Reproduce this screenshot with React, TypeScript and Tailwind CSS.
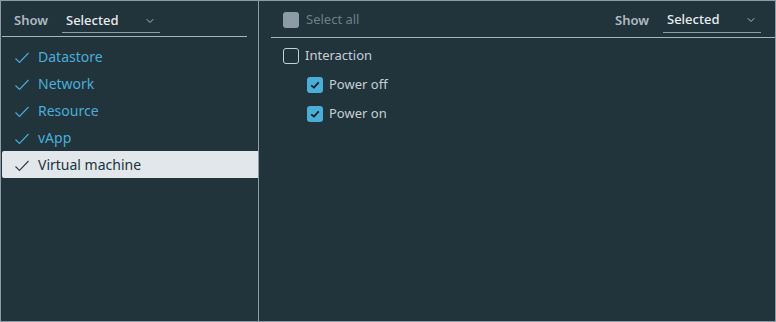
import { ChevronDown } from "lucide-react";

const types = ["Datastore", "Network", "Resource", "vApp", "Virtual machine"];

function Check({ className }: { className: string }) {
  return (
    <svg viewBox="0 0 16 16" className={className} fill="none" stroke="currentColor" strokeWidth="1.1">
      <path d="M1.5 9.5 L5.5 13.5 L14.5 4" />
    </svg>
  );
}

function ShowSelect() {
  return (
    <div className="flex items-center gap-[14px]">
      <span className="text-[13px] font-semibold text-[#adbbc4]">Show</span>
      <div className="flex items-center justify-between w-[98px] h-[24px] border-b border-[#8c9ba5] pl-[4px] pr-[4px]">
        <span className="text-[13px] font-medium text-[#e9ecef]">Selected</span>
        <ChevronDown className="w-[12px] h-[12px] text-[#adbbc4]" strokeWidth={2} />
      </div>
    </div>
  );
}

function Box({ checked }: { checked: boolean }) {
  if (checked) {
    return (
      <span className="flex items-center justify-center w-[16px] h-[16px] rounded-[3px] bg-[#49afd9]">
        <svg viewBox="0 0 16 16" className="w-[12px] h-[12px]" fill="none" stroke="#0e1d25" strokeWidth="2.4">
          <path d="M3 8.5 L6.5 11.5 L13 4.5" />
        </svg>
      </span>
    );
  }
  return <span className="w-[16px] h-[16px] rounded-[3px] border border-[#c5d0d6]" />;
}

export default function App() {
  return (
    <div
      className="w-[776px] h-[322px] bg-[#21333b] border border-[#8c9ba5] flex"
      style={{ fontFamily: '"Noto Sans", sans-serif' }}
    >
      <div className="w-[258px] border-r border-[#8c9ba5] flex flex-col">
        <div className="h-[36px] ml-[1px] mr-[11px] border-b border-[#a9b3b9] flex items-center pl-[12px] pt-[5px]">
          <ShowSelect />
        </div>
        <ul className="pt-[6px] pl-[1px]">
          {types.map((t) => {
            const active = t === "Virtual machine";
            return (
              <li
                key={t}
                className={`h-[27px] flex items-center gap-[8px] pl-[12px] ${
                  active ? "bg-[#e1e7ea] text-[#21333b] rounded-l-[2px]" : "text-[#49afd9]"
                }`}
              >
                <Check className={`w-[16px] h-[16px] ${active ? "text-[#313d43]" : "text-[#49afd9]"}`} />
                <span className="text-[14px]">{t}</span>
              </li>
            );
          })}
        </ul>
      </div>
      <div className="flex-1 flex flex-col">
        <div className="h-[37px] ml-[12px] border-b border-[#a9b3b9] flex items-center justify-between pl-[12px] pr-[14px] pt-[3px]">
          <div className="flex items-center gap-[7px] -mt-[2px]">
            <span className="w-[16px] h-[16px] rounded-[3px] bg-[#8c9ba5]" />
            <span className="text-[13px] text-[#6f7f88]">Select all</span>
          </div>
          <ShowSelect />
        </div>
        <div className="pl-[24px] pt-[10px] flex flex-col">
          <div className="h-[16px] flex items-center gap-[6px] text-[#c5d0d6] text-[13px]">
            <Box checked={false} />
            <span>Interaction</span>
          </div>
          <div className="pl-[24px] pt-[13px] flex flex-col gap-[13px]">
            {["Power off", "Power on"].map((p) => (
              <div key={p} className="h-[16px] flex items-center gap-[6px] text-[#c5d0d6] text-[13px]">
                <Box checked />
                <span>{p}</span>
              </div>
            ))}
          </div>
        </div>
      </div>
    </div>
  );
}
